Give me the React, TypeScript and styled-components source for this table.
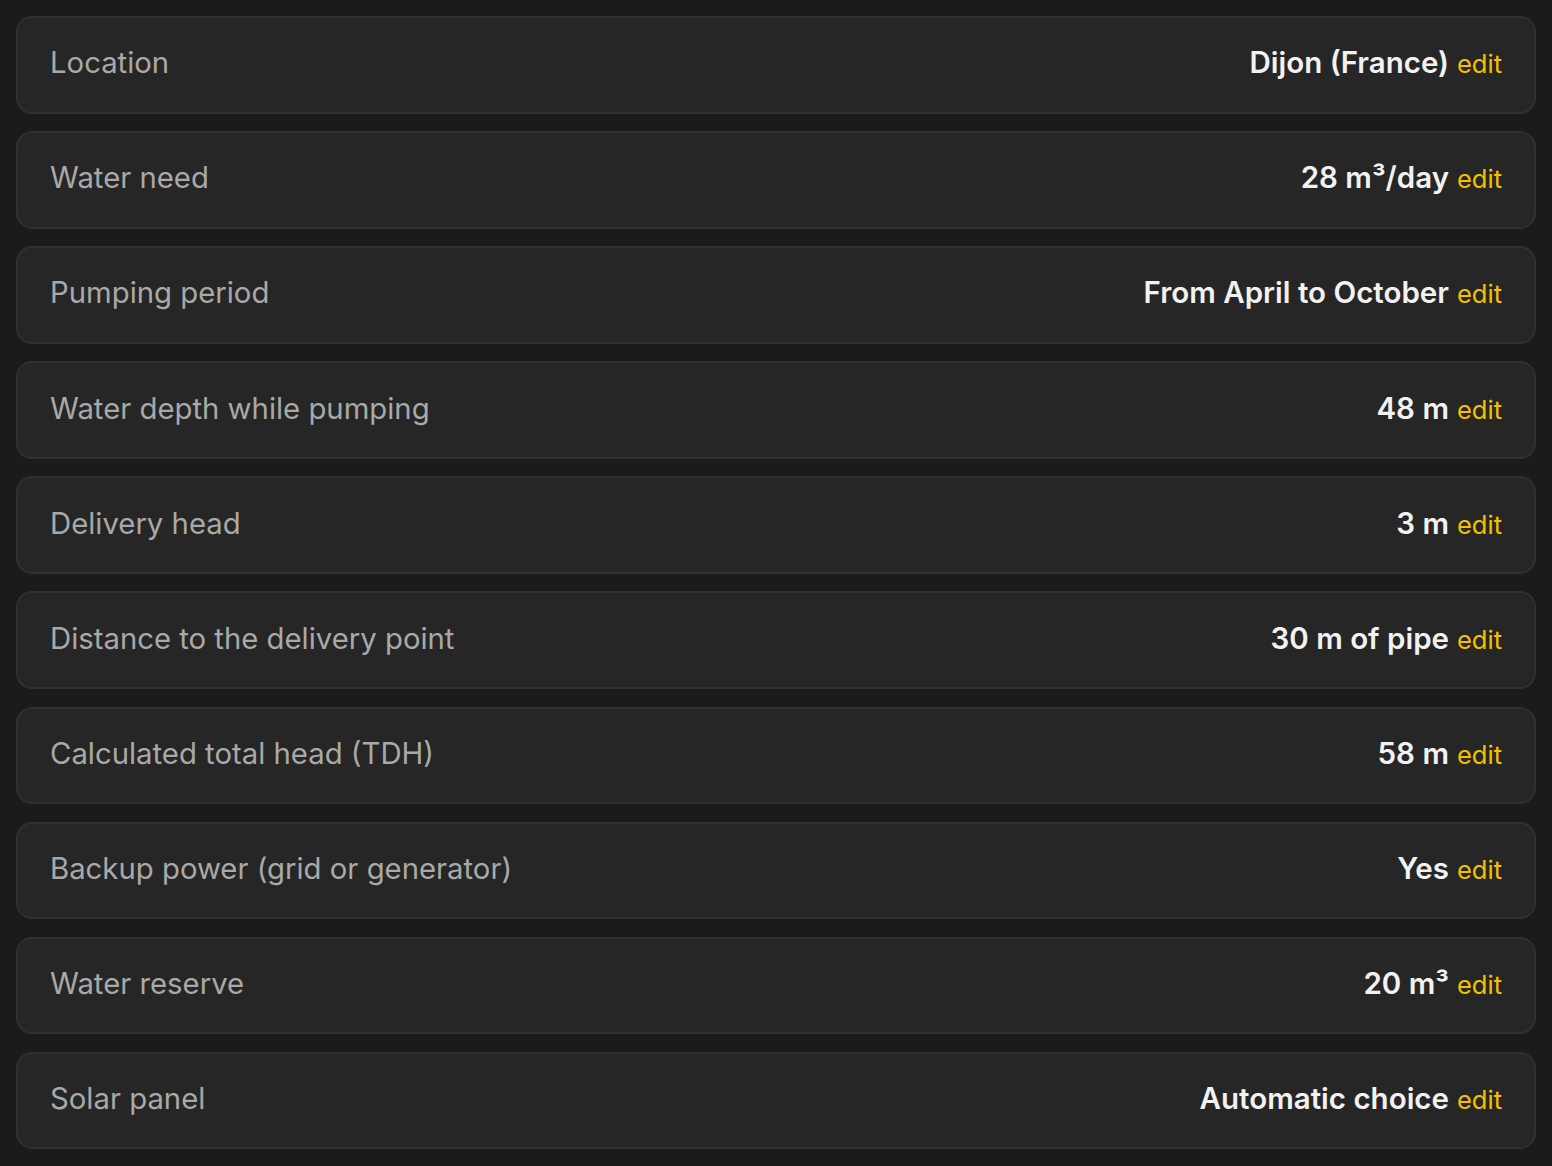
import styled, { createGlobalStyle } from 'styled-components'

/*---> Data <---*/
const rows = [
  { label: 'Location', value: 'Dijon (France)' },
  { label: 'Water need', value: '28 m³/day' },
  { label: 'Pumping period', value: 'From April to October' },
  { label: 'Water depth while pumping', value: '48 m' },
  { label: 'Delivery head', value: '3 m' },
  { label: 'Distance to the delivery point', value: '30 m of pipe' },
  { label: 'Calculated total head (TDH)', value: '58 m' },
  { label: 'Backup power (grid or generator)', value: 'Yes' },
  { label: 'Water reserve', value: '20 m³' },
  { label: 'Solar panel', value: 'Automatic choice' },
]

/*---> Component <---*/
export default function App() {
  return (
    <>
      <GlobalStyle />
      <List>
        {rows.map((row) => (
          <Row key={row.label}>
            <Label>{row.label}</Label>
            <ValueWrap>
              <Value>{row.value}</Value>
              <Edit href="#">edit</Edit>
            </ValueWrap>
          </Row>
        ))}
      </List>
    </>
  )
}

/*---> Styles <---*/
const GlobalStyle = createGlobalStyle`
  html, body {
    margin: 0;
    padding: 0;
    background: #1b1b1b;
    font-family: Inter, 'Noto Sans', sans-serif;
  }
`

const List = styled.div`
  display: flex;
  flex-direction: column;
  gap: 17.6px;
  padding: 16px 16px;
`

const Row = styled.div`
  box-sizing: border-box;
  height: 97.5px;
  display: flex;
  align-items: center;
  justify-content: space-between;
  padding: 0 32px 3px 32px;
  background: #262626;
  border: 2px solid #303030;
  border-radius: 16px;
`

const Label = styled.div`
  font-size: 29.3px;
  line-height: 36px;
  color: #a9a9a9;
`

const ValueWrap = styled.div`
  display: flex;
  align-items: baseline;
  gap: 8px;
  line-height: 36px;
`

const Value = styled.span`
  font-size: 29.5px;
  font-weight: 600;
  color: #f2f2f2;
`

const Edit = styled.a`
  font-size: 25.5px;
  color: #f5c000;
  text-decoration: none;
`
